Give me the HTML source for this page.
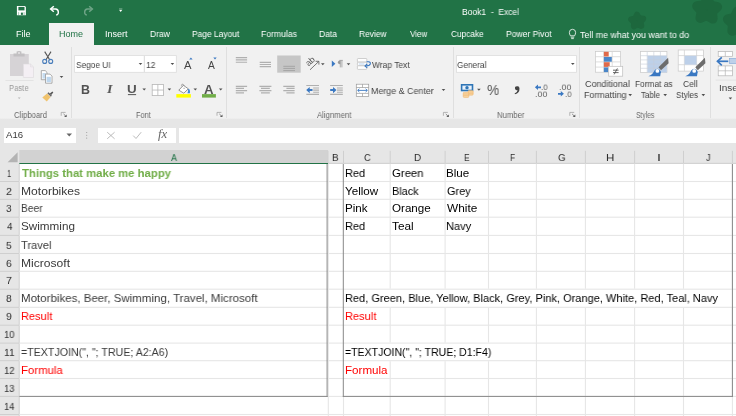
<!DOCTYPE html>
<html><head><meta charset="utf-8"><title>Book1 - Excel</title>
<style>
html,body{margin:0;padding:0;background:#fff;}
#app{position:relative;width:736px;height:416px;overflow:hidden;background:#fff;font-family:"Liberation Sans",sans-serif;}
#app div,#app svg{position:absolute;}
#app svg{will-change:transform;}
.t{position:absolute;will-change:transform;white-space:pre;line-height:1;transform-origin:0 50%;font-family:"Liberation Sans",sans-serif;}
.vl{width:1px;background:#d8d8d8;}
.hl{height:1px;background:#d8d8d8;}
.sep{width:1px;background:#dfdfdf;top:47px;height:70.6px;}
.box{background:#fff;border:1px solid #dcdcdc;box-sizing:border-box;}

</style></head>
<body>
<div id="app">
<!-- title bar -->
<div style="left:0;top:0;width:736px;height:44.7px;background:#217346;"></div>
<!-- home tab -->
<div style="left:49px;top:23.3px;width:45.3px;height:22px;background:#f1f1f1;"></div>
<!-- ribbon -->
<div style="left:0;top:44.7px;width:736px;height:74.8px;background:#f1f1f1;"></div>
<!-- formula bar strip -->
<div style="left:0;top:119.5px;width:736px;height:44px;background:#e6e6e6;"></div>
<div style="left:0;top:117.6px;width:736px;height:2.4px;background:linear-gradient(#f1f1f1,#e3e3e3);"></div>
<!-- group separators -->
<div class="sep" style="left:71px;"></div>
<div class="sep" style="left:226.4px;"></div>
<div class="sep" style="left:453.2px;"></div>
<div class="sep" style="left:579.2px;"></div>
<div class="sep" style="left:710.2px;"></div>
<!-- name box, formula boxes -->
<div style="left:4px;top:127.5px;width:71.5px;height:15px;background:#fff;"></div>
<div style="left:97.5px;top:127.5px;width:78px;height:15px;background:#fff;"></div>
<div style="left:178.5px;top:127.5px;width:560px;height:15px;background:#fff;"></div>
<!-- column header -->
<div style="left:19.3px;top:150.2px;width:308.6px;height:13px;background:#d2d2d2;"></div>
<div style="left:19.3px;top:162.7px;width:308.6px;height:1.2px;background:#217346;"></div>
<!-- grid area white -->
<div style="left:19.3px;top:163.9px;width:717px;height:253px;background:#fff;"></div>
<!-- title bar decorations (clovers) -->
<svg style="left:0;top:0;" width="736" height="45" viewBox="0 0 736 45">
  <g fill="#1d673d" stroke="#1d673d" stroke-linejoin="round">
    <polygon points="637.0,14.7 639.1,18.2 643.2,18.7 640.5,21.9 641.3,25.9 637.5,24.3 633.9,26.3 634.2,22.2 631.2,19.4 635.2,18.4" stroke-width="6"/>
    <polygon points="707.6,-0.9 710.5,5.4 717.3,7.0 712.2,11.8 712.8,18.8 706.7,15.4 700.3,18.1 701.6,11.2 697.0,6.0 704.0,5.1" stroke-width="9.6"/>
    <polygon points="737.4,11.3 741.0,17.3 748.0,18.2 743.4,23.4 744.7,30.3 738.3,27.6 732.2,31.0 732.8,24.0 727.7,19.2 734.5,17.6" stroke-width="9.6"/>
  </g>
</svg>
<!-- QAT icons -->
<svg style="left:0;top:0;" width="140" height="24" viewBox="0 0 140 24">
  <!-- save -->
  <path d="M16.9 6.1 H24.9 L25.9 7.1 V15.3 H16.9 Z" fill="#fff"/>
  <rect x="18.4" y="6.9" width="6.1" height="3.5" fill="#217346"/>
  <rect x="20.9" y="12.6" width="2" height="2.3" fill="#217346"/>
  <rect x="18" y="12.1" width="1.1" height="3.2" fill="#217346" opacity="0.35"/>
  <rect x="23.5" y="12.1" width="1.2" height="3.2" fill="#217346" opacity="0.35"/>
  <!-- undo -->
  <path d="M50.8 9 H55.6 A3.2 3.2 0 0 1 56.2 15.2" fill="none" stroke="#fff" stroke-width="1.4"/>
  <path d="M53.8 6.2 L50.6 9 L53.8 11.8" fill="none" stroke="#fff" stroke-width="1.5"/>
  <!-- redo (dim) -->
  <g opacity="0.35">
  <path d="M92.2 9 H87.4 A3.2 3.2 0 0 0 86.8 15.2" fill="none" stroke="#fff" stroke-width="1.4"/>
  <path d="M89.2 6.2 L92.4 9 L89.2 11.8" fill="none" stroke="#fff" stroke-width="1.5"/>
  </g>
  <!-- customize arrow -->
  <path d="M119 9.8 H122.4 L120.7 12 Z" fill="#fff"/>
  <rect x="119" y="8.3" width="3.4" height="0.7" fill="#fff" opacity="0.35"/>
</svg>
<!-- RIBBON ICONS -->
<svg style="left:0;top:0;" width="736" height="150" viewBox="0 0 736 150">
  <!-- paste (disabled) -->
  <rect x="10" y="54" width="18.8" height="22" fill="#d6d3d6"/>
  <path d="M13.5 56.6 V53.4 H16.6 V51.6 Q19 50.4 21.4 51.6 V53.4 H24.6 V56.6 Z" fill="#c2c0c2"/>
  <circle cx="19" cy="52.9" r="1" fill="#e6e4e6"/>
  <path d="M23.4 64 H30.6 L33.5 66.9 V77.5 H23.4 Z" fill="#f4eff4" stroke="#dedade" stroke-width="0.6"/>
  <path d="M30.6 64 V66.9 H33.5" fill="none" stroke="#dedade" stroke-width="0.6"/>
  <rect x="5.4" y="80.2" width="28.2" height="0.7" fill="#dddddd"/>
  <path d="M17.8 97.4 H20.6 L19.2 99 Z" fill="#b4b4b4"/>
  <!-- scissors -->
  <path d="M44.7 51.6 L50 60.2 M51 51.6 L45.7 60.2" stroke="#555" stroke-width="1.1" fill="none"/>
  <circle cx="44.7" cy="61.4" r="2" fill="none" stroke="#4a7ebb" stroke-width="1.1"/>
  <circle cx="50.7" cy="61.4" r="2" fill="none" stroke="#4a7ebb" stroke-width="1.1"/>
  <!-- copy -->
  <path d="M41.3 70.6 H45.2 L47 72.4 V79.7 H41.3 Z" fill="#fff" stroke="#8a8a8a" stroke-width="0.7"/>
  <rect x="42.5" y="73" width="3.4" height="5.6" fill="#c5dbef"/>
  <path d="M45.5 74.1 H50 L52 76.1 V83.2 H45.5 Z" fill="#fff" stroke="#8a8a8a" stroke-width="0.7"/>
  <rect x="46.6" y="76.8" width="4.3" height="5.4" fill="#bcd6ee"/>
  <path d="M59.7 75.9 H63.3 L61.5 78.0 Z" fill="#505050"/>
  <!-- format painter -->
  <path d="M42.3 97.4 L47 93.6 L50.6 97 L46.8 101.6 Z" fill="#f0c36d"/>
  <path d="M47.3 93.2 L48.6 92.2 L51.8 95.4 L50.9 96.8 Z" fill="#666"/>
  <path d="M49.8 93.6 L52.4 91.6 L53.3 92.5 L51.2 95 Z" fill="#555"/>
</svg>
<svg style="left:0;top:0;" width="736" height="150" viewBox="0 0 736 150">
  <!-- font combo boxes -->
  <rect x="74.6" y="55.6" width="69.6" height="16.7" fill="#fff" stroke="#dcdcdc" stroke-width="0.8"/>
  <rect x="144.6" y="55.6" width="31.7" height="16.7" fill="#fff" stroke="#dcdcdc" stroke-width="0.8"/>
  <path d="M138.7 62.9 H142.3 L140.5 65.0 Z" fill="#505050"/>
  <path d="M170.6 62.9 H174.2 L172.4 65.0 Z" fill="#505050"/>
  <!-- grow/shrink font triangles -->
  <path d="M189.2 59.6 L190.9 57.4 L192.6 59.6 Z" fill="#3a78c2"/>
  <path d="M213.3 57.4 H216.7 L215 59.6 Z" fill="#3a78c2"/>
  <!-- underline of U -->
  <rect x="127.9" y="94.2" width="8.2" height="0.9" fill="#444"/>
  <path d="M142.4 88.5 H146.0 L144.2 90.6 Z" fill="#505050"/>
  <!-- borders icon -->
  <rect x="152.2" y="84.5" width="11.3" height="11.1" fill="#fff" stroke="#b6b6b6" stroke-width="0.8"/>
  <path d="M157.85 84.5 V95.6 M152.2 90.05 H163.5" stroke="#b6b6b6" stroke-width="0.8"/>
  <path d="M167.6 88.5 H171.2 L169.4 90.6 Z" fill="#505050"/>
  <!-- fill bucket -->
  <path d="M189.2 88.9 Q190.6 91.2 189.9 93.3 L187.4 93.2 Q188.9 91.4 187.8 89.2 Z" fill="#3a86d8"/>
  <path d="M178.8 90.2 L183.4 85.3 L188.3 88.8 L183.8 93.2 Z" fill="#fff" stroke="#6a6a6a" stroke-width="0.7" stroke-linejoin="round"/>
  <path d="M182.2 86.5 L181.5 85.2 Q181.6 84 182.9 84.1 L184.4 86" fill="none" stroke="#7a7a7a" stroke-width="0.6"/>
  <path d="M183.4 88.3 H184.8" stroke="#8a8a8a" stroke-width="0.7"/>
  <rect x="176.3" y="94.1" width="14.6" height="3.5" fill="#ffff00"/>
  <path d="M193.5 88.5 H197.1 L195.3 90.6 Z" fill="#505050"/>
  <!-- font color bar -->
  <rect x="202" y="94.1" width="13.9" height="3.5" fill="#70ad47"/>
  <path d="M218.9 88.5 H222.5 L220.7 90.6 Z" fill="#505050"/>
  <!-- launchers -->
  <path d="M61.2 115.8 V112.4 H65.6" fill="none" stroke="#9a9a9a" stroke-width="0.7"/><path d="M63.6 114 L65.8 116.2" fill="none" stroke="#6a6a6a" stroke-width="0.8"/><path d="M66.7 114.5 V117.1 H64.1 Z" fill="#5a5a5a"/>
  <path d="M217.0 115.8 V112.4 H221.4" fill="none" stroke="#9a9a9a" stroke-width="0.7"/><path d="M219.4 114 L221.6 116.2" fill="none" stroke="#6a6a6a" stroke-width="0.8"/><path d="M222.5 114.5 V117.1 H219.9 Z" fill="#5a5a5a"/>
  <path d="M443.4 115.8 V112.4 H447.8" fill="none" stroke="#9a9a9a" stroke-width="0.7"/><path d="M445.8 114 L448.0 116.2" fill="none" stroke="#6a6a6a" stroke-width="0.8"/><path d="M448.9 114.5 V117.1 H446.3 Z" fill="#5a5a5a"/>
  <path d="M569.8 115.8 V112.4 H574.2" fill="none" stroke="#9a9a9a" stroke-width="0.7"/><path d="M572.2 114 L574.4 116.2" fill="none" stroke="#6a6a6a" stroke-width="0.8"/><path d="M575.3 114.5 V117.1 H572.7 Z" fill="#5a5a5a"/>
  <!-- ALIGNMENT -->
  <g stroke="#b0b0b0" stroke-width="1.15">
    <path d="M235.8 57.6 H247.1 M235.8 59.8 H247.1 M235.8 62.2 H247.1"/>
    <path d="M259.7 62.4 H271 M259.7 64.5 H271 M259.7 66.6 H271"/>
  </g>
  <rect x="277.2" y="55.5" width="23.5" height="17.2" fill="#c6c6c6"/>
  <path d="M283.3 66.3 H295 M283.3 68.4 H295 M283.3 70.6 H295" stroke="#a4a4a4" stroke-width="1"/>
  <!-- row 2 align -->
  <g stroke="#b0b0b0" stroke-width="1.15">
    <path d="M235.8 86.3 H247.1 M235.8 88.4 H244 M235.8 90.6 H247.1 M235.8 92.8 H244"/>
    <path d="M259.4 86.3 H271.4 M261 88.4 H269.8 M259.4 90.6 H271.4 M261 92.8 H269.8"/>
    <path d="M283.3 86.3 H294.6 M286.4 88.4 H294.6 M283.3 90.6 H294.6 M286.4 92.8 H294.6"/>
  </g>
  <!-- orientation -->
  <g>
    <text x="0" y="0" transform="translate(308.4,66.6) rotate(-42)" font-family="'Liberation Sans',sans-serif" font-size="8.6" fill="#555">ab</text>
    <path d="M310 69.8 L318.6 61.6" stroke="#555" stroke-width="0.8" fill="none"/>
    <path d="M315.6 61.3 H318.9 V64.6" stroke="#555" stroke-width="0.8" fill="none"/>
    <path d="M321.0 63.2 H324.6 L322.8 65.3 Z" fill="#505050"/>
  </g>
  <!-- text direction -->
  <path d="M331.8 60.5 L335.4 63.7 L331.8 66.9 Z" fill="#3a78c2"/>
  <path d="M339.4 60.4 H342.8 M340.3 60.4 V67.4 M341.9 60.4 V67.4" stroke="#9a9a9a" stroke-width="0.8" fill="none"/>
  <path d="M339.8 60.4 A1.9 1.9 0 0 0 339.8 64.2 H340.3 V60.4 Z" fill="#9a9a9a"/>
  <path d="M346.7 63.2 H350.3 L348.5 65.3 Z" fill="#505050"/>
  <!-- decrease indent -->
  <g stroke="#b0b0b0" stroke-width="1.15">
    <path d="M306.3 85.5 H319 M306.3 94.4 H319 M313.2 88 H319 M313.2 90.1 H319 M313.2 92.2 H319"/>
    <path d="M330.1 85.5 H342.8 M330.1 94.4 H342.8 M337 88 H342.8 M337 90.1 H342.8 M337 92.2 H342.8"/>
  </g>
  <path d="M306.2 90.1 L309.7 86.9 V89.1 H312.5 V91.1 H309.7 V93.3 Z" fill="#3a78c2"/>
  <path d="M336.5 90.1 L333 86.9 V89.1 H330.2 V91.1 H333 V93.3 Z" fill="#3a78c2"/>
</svg>
<svg style="left:0;top:0;will-change:transform;" width="736" height="150" viewBox="0 0 736 150">
  <!-- wrap text icon -->
  <g fill="#fff" stroke="#bcbcbc" stroke-width="0.7">
    <rect x="357.4" y="58.5" width="9.4" height="3.6" rx="0.8"/>
    <rect x="357.4" y="62.2" width="9.4" height="3.5" rx="0.8"/>
    <rect x="357.4" y="65.8" width="9.4" height="3.6" rx="0.8"/>
  </g>
  <path d="M358.8 64 H364.4" stroke="#9cc0e8" stroke-width="0.7"/>
  <path d="M366.6 61.7 H368.6 Q370.6 61.9 370.3 63.9 Q369.9 65.9 366.2 65.9" fill="none" stroke="#3a78c2" stroke-width="1.1"/>
  <path d="M367.2 64 L365 65.9 L367.2 67.8" fill="none" stroke="#3a78c2" stroke-width="1.1"/>
  <!-- merge & center icon -->
  <g fill="#fff" stroke="#9a9a9a" stroke-width="0.7">
    <rect x="356.3" y="84.2" width="12.4" height="12.3"/>
    <path d="M356.3 87.5 H368.7 M356.3 93.4 H368.7 M362.5 84.2 V87.5 M362.5 93.4 V96.5" fill="none"/>
  </g>
  <path d="M358 90.4 H367" stroke="#3a78c2" stroke-width="0.9"/>
  <path d="M359.4 88.8 L357.6 90.4 L359.4 92 M365.6 88.8 L367.4 90.4 L365.6 92" fill="none" stroke="#3a78c2" stroke-width="0.9"/>
  <path d="M441.7 88.9 H445.3 L443.5 91.0 Z" fill="#505050"/>
  <!-- number combo -->
  <rect x="456.4" y="55.6" width="120.1" height="16.7" fill="#fff" stroke="#dcdcdc" stroke-width="0.8"/>
  <path d="M571.0 62.9 H574.6 L572.8 65.0 Z" fill="#505050"/>
  <!-- currency icon -->
  <rect x="461.6" y="84.8" width="10.9" height="5.7" fill="#e8f1fa" stroke="#2e75b6" stroke-width="1.6"/>
  <ellipse cx="467" cy="87.7" rx="1.7" ry="1.6" fill="#2e75b6"/>
  <g fill="#f8d5a4" stroke="#efb266" stroke-width="0.5">
    <rect x="468" y="90.6" width="5.2" height="4.6" rx="1"/>
    <path d="M468 92.1 H473.2 M468 93.7 H473.2" fill="none"/>
    <rect x="463.2" y="92.3" width="5.6" height="5.2" rx="1"/>
    <path d="M463.2 94 H468.8 M463.2 95.7 H468.8" fill="none"/>
  </g>
  <path d="M477.1 88.7 H480.7 L478.9 90.8 Z" fill="#505050"/>
  <!-- comma -->
  <path d="M517 86.2 A2 2 0 1 0 517.6 90.1 Q517.4 92.6 514.6 93.6 L515 94.3 Q519.6 92.8 519.5 88.4 A2.2 2.2 0 0 0 517 86.2 Z" fill="#444"/>
  <!-- dec/inc decimal arrows -->
  <path d="M534.9 87.3 L538 84.6 V86.4 H541 V88.2 H538 V90 Z" fill="#3a78c2"/>
  <path d="M563.9 93.8 L560.8 91.1 V92.9 H558 V94.7 H560.8 V96.5 Z" fill="#3a78c2"/>
  <!-- Conditional formatting icon -->
  <rect x="595.4" y="51.5" width="25.2" height="20.7" fill="#fff" stroke="#c8c8c8" stroke-width="0.7"/>
  <path d="M595.4 56.7 H620.6 M595.4 61.9 H620.6 M595.4 67.1 H620.6 M603.6 51.5 V72.2 M612.2 51.5 V72.2" stroke="#d0d0d0" stroke-width="0.7" fill="none"/>
  <rect x="603.9" y="51.8" width="4.8" height="4.7" fill="#e06a4a"/>
  <rect x="603.9" y="57" width="7.9" height="4.7" fill="#4a86c8"/>
  <rect x="603.9" y="62.2" width="5.8" height="4.7" fill="#e06a4a"/>
  <rect x="603.9" y="67.4" width="4.4" height="4.7" fill="#4a86c8"/>
  <rect x="608.7" y="66.3" width="14" height="9.9" fill="#fff" stroke="#bdbdbd" stroke-width="0.7"/>
  <path d="M613 70.2 H618.6 M613 72.6 H618.6 M617.4 68.4 L614.2 74.4" stroke="#444" stroke-width="0.8" fill="none"/>
  <path d="M628.4 94.1 H632.0 L630.2 96.2 Z" fill="#505050"/>
  <!-- Format as table icon -->
  <rect x="640.5" y="51.5" width="26.4" height="21.1" fill="#fff" stroke="#c8c8c8" stroke-width="0.7"/>
  <rect x="647.4" y="55.8" width="19.4" height="16.7" fill="#bdd0e9"/>
  <path d="M640.5 55.7 H666.9 M640.5 59.9 H666.9 M640.5 64.1 H666.9 M640.5 68.3 H666.9 M647.2 51.5 V72.6 M653.8 51.5 V72.6 M660.4 51.5 V72.6" stroke="#c6cdd8" stroke-width="0.6" fill="none"/>
  <path d="M668.1 57.7 L668.6 63.3 L661.0 70.2 L658.5 67.3 Z" fill="#6c6c6c"/>
  <path d="M648.4 76.3 Q652.8 74.6 654.6 70.2 Q656.6 67.6 659.4 69.4 Q661.4 71.4 660.6 73.4 L660.2 76.3 Z" fill="#3a78c2"/>
  <circle cx="657.4" cy="70.9" r="1.9" fill="#fff"/>
  <path d="M663.4 94.1 H667.0 L665.2 96.2 Z" fill="#505050"/>
  <!-- Cell styles icon -->
  <rect x="678.2" y="50" width="25.2" height="21.1" fill="#fff" stroke="#c8c8c8" stroke-width="0.7"/>
  <path d="M678.2 55.6 H703.4 M678.2 64.7 H703.4 M684.4 50 V71.1 M696.6 50 V71.1" stroke="#d0d0d0" stroke-width="0.7" fill="none"/>
  <rect x="684.6" y="55.8" width="11.9" height="8.8" fill="#bdd0e9"/>
  <path d="M704.9 57.7 L705.4 63.3 L697.8 70.2 L695.3 67.3 Z" fill="#6c6c6c"/>
  <path d="M685.2 76.3 Q689.6 74.6 691.4 70.2 Q693.4 67.6 696.2 69.4 Q698.2 71.4 697.4 73.4 L697.0 76.3 Z" fill="#3a78c2"/>
  <circle cx="694.2" cy="70.9" r="1.9" fill="#fff"/>
  <path d="M701.5 94.1 H705.1 L703.3 96.2 Z" fill="#505050"/>
  <!-- Insert icon -->
  <g fill="#fff" stroke="#b4b4b4" stroke-width="0.7">
    <rect x="718.2" y="51.5" width="14.2" height="4.8"/>
    <path d="M725.3 51.5 V56.3" fill="none"/>
    <rect x="718.2" y="65.9" width="14.2" height="9.9"/>
    <path d="M725.3 65.9 V75.8 M718.2 70.8 H732.4" fill="none"/>
  </g>
  <rect x="729.5" y="58.5" width="8" height="5" fill="#bdd0e9" stroke="#7fa6d6" stroke-width="0.6"/>
  <path d="M717.6 61.3 H728.3" stroke="#3a78c2" stroke-width="1.7" fill="none"/><path d="M721.8 57.3 L717.4 61.3 L721.8 65.3" stroke="#3a78c2" stroke-width="1.6" fill="none"/>
  <rect x="715.6" y="79.7" width="21" height="0.7" fill="#dddddd"/>
  <path d="M728.6 97.5 H732.2 L730.4 99.6 Z" fill="#505050"/>
  <!-- lightbulb -->
  <path d="M570.4 35.8 Q569.4 34 569.4 32.4 A3.1 3.1 0 0 1 575.6 32.4 Q575.6 34 574.6 35.8 Z" fill="none" stroke="#fff" stroke-width="0.8"/>
  <path d="M570.8 37.2 H574.2 M571.2 38.6 H573.8" stroke="#fff" stroke-width="0.8"/>
  <!-- formula bar icons -->
  <g fill="#9a9a9a">
    <circle cx="86.7" cy="132.5" r="0.55"/><circle cx="86.7" cy="135.3" r="0.55"/><circle cx="86.7" cy="138.1" r="0.55"/>
  </g>
  <path d="M107.2 132.2 L114.6 138.8 M114.6 132.2 L107.2 138.8" stroke="#b4b4b4" stroke-width="0.9" fill="none"/>
  <path d="M133.2 135.6 L136 138.5 L141.2 132.2" stroke="#b4b4b4" stroke-width="0.9" fill="none"/>
  <path d="M66.5 133.4 H72 L69.25 136.6 Z" fill="#666"/>
</svg>

<!-- grid -->
<svg style="left:0;top:0;" width="736" height="416" viewBox="0 0 736 416">
<rect x="0" y="150" width="19.3" height="266" fill="#e6e6e6"/>
<path d="M17.6 152.2 L17.6 162.2 L7.6 162.2 Z" fill="#b4b4b4"/>
<rect x="327.50" y="150.80" width="1.0" height="12.20" fill="#cfcfcf"/>
<rect x="343.00" y="150.80" width="1.0" height="12.20" fill="#cfcfcf"/>
<rect x="389.70" y="150.80" width="1.0" height="12.20" fill="#cfcfcf"/>
<rect x="444.60" y="150.80" width="1.0" height="12.20" fill="#cfcfcf"/>
<rect x="488.00" y="150.80" width="1.0" height="12.20" fill="#cfcfcf"/>
<rect x="535.90" y="150.80" width="1.0" height="12.20" fill="#cfcfcf"/>
<rect x="584.90" y="150.80" width="1.0" height="12.20" fill="#cfcfcf"/>
<rect x="634.10" y="150.80" width="1.0" height="12.20" fill="#cfcfcf"/>
<rect x="683.00" y="150.80" width="1.0" height="12.20" fill="#cfcfcf"/>
<rect x="731.90" y="150.80" width="1.0" height="12.20" fill="#cfcfcf"/>
<rect x="328.00" y="162.80" width="408.00" height="1.0" fill="#cfcfcf"/>
<rect x="18.70" y="164.00" width="1.0" height="252.00" fill="#cfcfcf"/>
<rect x="0.00" y="181.00" width="19.30" height="1.0" fill="#cfcfcf"/>
<rect x="0.00" y="198.80" width="19.30" height="1.0" fill="#cfcfcf"/>
<rect x="0.00" y="216.70" width="19.30" height="1.0" fill="#cfcfcf"/>
<rect x="0.00" y="234.90" width="19.30" height="1.0" fill="#cfcfcf"/>
<rect x="0.00" y="253.00" width="19.30" height="1.0" fill="#cfcfcf"/>
<rect x="0.00" y="270.80" width="19.30" height="1.0" fill="#cfcfcf"/>
<rect x="0.00" y="288.70" width="19.30" height="1.0" fill="#cfcfcf"/>
<rect x="0.00" y="306.80" width="19.30" height="1.0" fill="#cfcfcf"/>
<rect x="0.00" y="324.70" width="19.30" height="1.0" fill="#cfcfcf"/>
<rect x="0.00" y="342.60" width="19.30" height="1.0" fill="#cfcfcf"/>
<rect x="0.00" y="360.20" width="19.30" height="1.0" fill="#cfcfcf"/>
<rect x="0.00" y="378.00" width="19.30" height="1.0" fill="#cfcfcf"/>
<rect x="0.00" y="395.90" width="19.30" height="1.0" fill="#cfcfcf"/>
<rect x="0.00" y="414.00" width="19.30" height="1.0" fill="#cfcfcf"/>
<rect x="19.30" y="180.95" width="716.70" height="1.1" fill="#e6e6e6"/>
<rect x="19.30" y="198.75" width="716.70" height="1.1" fill="#e6e6e6"/>
<rect x="19.30" y="216.65" width="716.70" height="1.1" fill="#e6e6e6"/>
<rect x="19.30" y="234.85" width="716.70" height="1.1" fill="#e6e6e6"/>
<rect x="19.30" y="252.95" width="716.70" height="1.1" fill="#e6e6e6"/>
<rect x="19.30" y="270.75" width="716.70" height="1.1" fill="#e6e6e6"/>
<rect x="19.30" y="288.65" width="716.70" height="1.1" fill="#e6e6e6"/>
<rect x="19.30" y="306.75" width="716.70" height="1.1" fill="#e6e6e6"/>
<rect x="19.30" y="324.65" width="716.70" height="1.1" fill="#e6e6e6"/>
<rect x="19.30" y="342.55" width="716.70" height="1.1" fill="#e6e6e6"/>
<rect x="19.30" y="360.15" width="716.70" height="1.1" fill="#e6e6e6"/>
<rect x="19.30" y="377.95" width="716.70" height="1.1" fill="#e6e6e6"/>
<rect x="19.30" y="395.85" width="716.70" height="1.1" fill="#e6e6e6"/>
<rect x="19.30" y="413.95" width="716.70" height="1.1" fill="#e6e6e6"/>
<rect x="327.75" y="163.90" width="1.1" height="252.10" fill="#e6e6e6"/>
<rect x="342.95" y="396.90" width="1.1" height="19.10" fill="#e6e6e6"/>
<rect x="389.65" y="163.90" width="1.1" height="124.80" fill="#e6e6e6"/>
<rect x="389.65" y="307.80" width="1.1" height="34.80" fill="#e6e6e6"/>
<rect x="389.65" y="361.20" width="1.1" height="54.80" fill="#e6e6e6"/>
<rect x="444.55" y="163.90" width="1.1" height="124.80" fill="#e6e6e6"/>
<rect x="444.55" y="307.80" width="1.1" height="34.80" fill="#e6e6e6"/>
<rect x="444.55" y="361.20" width="1.1" height="54.80" fill="#e6e6e6"/>
<rect x="487.95" y="163.90" width="1.1" height="124.80" fill="#e6e6e6"/>
<rect x="487.95" y="307.80" width="1.1" height="34.80" fill="#e6e6e6"/>
<rect x="487.95" y="361.20" width="1.1" height="54.80" fill="#e6e6e6"/>
<rect x="535.85" y="163.90" width="1.1" height="124.80" fill="#e6e6e6"/>
<rect x="535.85" y="307.80" width="1.1" height="108.20" fill="#e6e6e6"/>
<rect x="584.85" y="163.90" width="1.1" height="124.80" fill="#e6e6e6"/>
<rect x="584.85" y="307.80" width="1.1" height="108.20" fill="#e6e6e6"/>
<rect x="634.05" y="163.90" width="1.1" height="124.80" fill="#e6e6e6"/>
<rect x="634.05" y="307.80" width="1.1" height="108.20" fill="#e6e6e6"/>
<rect x="682.95" y="163.90" width="1.1" height="124.80" fill="#e6e6e6"/>
<rect x="682.95" y="307.80" width="1.1" height="108.20" fill="#e6e6e6"/>
<rect x="731.85" y="163.90" width="1.1" height="124.80" fill="#e6e6e6"/>
<rect x="731.85" y="307.80" width="1.1" height="108.20" fill="#e6e6e6"/>
<rect x="326.60" y="164.00" width="1.0" height="232.90" fill="#888888"/>
<rect x="19.30" y="395.90" width="308.30" height="1.0" fill="#888888"/>
<rect x="342.80" y="164.00" width="1.0" height="232.90" fill="#888888"/>
<rect x="342.80" y="395.90" width="390.10" height="1.0" fill="#888888"/>
<rect x="731.90" y="164.00" width="1.0" height="232.90" fill="#888888"/>
</svg>
<!-- text labels -->
<span class="t" style="left:462.31px;top:7px;font-size:8.6px;line-height:10px;color:#ffffff;transform-origin:0 8px;transform:scale(0.9890,1.0);">Book1  -  Excel</span>
<span class="t" style="left:16.01px;top:29px;font-size:9.0px;line-height:10px;color:#ffffff;transform-origin:0 8px;transform:scale(0.9854,1.0);">File</span>
<span class="t" style="left:59.31px;top:29px;font-size:9.0px;line-height:10px;color:#217346;transform-origin:0 8px;transform:scale(0.9869,1.0);">Home</span>
<span class="t" style="left:105.22px;top:29px;font-size:9.0px;line-height:10px;color:#ffffff;transform-origin:0 8px;transform:scale(0.9812,1.0);">Insert</span>
<span class="t" style="left:150.04px;top:29px;font-size:9.0px;line-height:10px;color:#ffffff;transform-origin:0 8px;transform:scale(0.9460,1.0);">Draw</span>
<span class="t" style="left:192.05px;top:29px;font-size:9.0px;line-height:10px;color:#ffffff;transform-origin:0 8px;transform:scale(0.9350,1.0);">Page Layout</span>
<span class="t" style="left:260.83px;top:29px;font-size:9.0px;line-height:10px;color:#ffffff;transform-origin:0 8px;transform:scale(0.9587,1.0);">Formulas</span>
<span class="t" style="left:318.83px;top:29px;font-size:9.0px;line-height:10px;color:#ffffff;transform-origin:0 8px;transform:scale(0.9508,1.0);">Data</span>
<span class="t" style="left:359.35px;top:29px;font-size:9.0px;line-height:10px;color:#ffffff;transform-origin:0 8px;transform:scale(0.9339,1.0);">Review</span>
<span class="t" style="left:410.00px;top:29px;font-size:9.0px;line-height:10px;color:#ffffff;transform-origin:0 8px;transform:scale(0.9000,1.0);">View</span>
<span class="t" style="left:450.63px;top:29px;font-size:9.0px;line-height:10px;color:#ffffff;transform-origin:0 8px;transform:scale(0.9191,1.0);">Cupcake</span>
<span class="t" style="left:505.83px;top:29px;font-size:9.0px;line-height:10px;color:#ffffff;transform-origin:0 8px;transform:scale(0.9510,1.0);">Power Pivot</span>
<span class="t" style="left:580.10px;top:30px;font-size:9.0px;line-height:10px;color:#ffffff;transform-origin:0 8px;transform:scale(0.9832,1.0);">Tell me what you want to do</span>
<span class="t" style="left:9.22px;top:83px;font-size:9.2px;line-height:10px;color:#9a9a9a;transform-origin:0 8px;transform:scale(0.8352,1.0);">Paste</span>
<span class="t" style="left:13.65px;top:110px;font-size:8.8px;line-height:10px;color:#666666;transform-origin:0 8px;transform:scale(0.8784,1.0);">Clipboard</span>
<span class="t" style="left:136.22px;top:110px;font-size:8.8px;line-height:10px;color:#666666;transform-origin:0 8px;transform:scale(0.8302,1.0);">Font</span>
<span class="t" style="left:317.20px;top:110px;font-size:8.8px;line-height:10px;color:#666666;transform-origin:0 8px;transform:scale(0.8801,1.0);">Alignment</span>
<span class="t" style="left:497.28px;top:110px;font-size:8.8px;line-height:10px;color:#666666;transform-origin:0 8px;transform:scale(0.8796,1.0);">Number</span>
<span class="t" style="left:635.69px;top:110px;font-size:8.8px;line-height:10px;color:#666666;transform-origin:0 8px;transform:scale(0.7651,1.0);">Styles</span>
<span class="t" style="left:75.54px;top:60px;font-size:9.2px;line-height:10px;color:#444444;transform-origin:0 8px;transform:scale(0.9032,1.0);">Segoe UI</span>
<span class="t" style="left:145.65px;top:60px;font-size:9.2px;line-height:10px;color:#444444;transform-origin:0 8px;transform:scale(0.9324,1.0);">12</span>
<span class="t" style="left:81.00px;top:83px;font-size:12.4px;line-height:14px;color:#525252;transform-origin:0 11px;transform:scale(1.0000,1.0);font-weight:bold;">B</span>
<span class="t" style="left:107.11px;top:81px;font-size:13.2px;line-height:15px;color:#5a5a5a;transform-origin:0 12px;transform:scale(1.0690,1.0);font-style:italic;font-weight:bold;font-family:'Liberation Serif',serif;">I</span>
<span class="t" style="left:127.21px;top:82px;font-size:11.6px;line-height:13px;color:#555555;transform-origin:0 11px;transform:scale(1.1549,1.0);font-weight:bold;">U</span>
<span class="t" style="left:372.40px;top:60px;font-size:9.2px;line-height:10px;color:#444444;transform-origin:0 8px;transform:scale(0.9202,1.0);">Wrap Text</span>
<span class="t" style="left:370.92px;top:86px;font-size:9.2px;line-height:10px;color:#444444;transform-origin:0 8px;transform:scale(0.9677,1.0);">Merge &amp; Center</span>
<span class="t" style="left:457.24px;top:60px;font-size:9.2px;line-height:10px;color:#444444;transform-origin:0 8px;transform:scale(0.8966,1.0);">General</span>
<span class="t" style="left:487.43px;top:82px;font-size:14.5px;line-height:16px;color:#555555;transform-origin:0 13px;transform:scale(0.9496,1.0);">%</span>
<span class="t" style="left:585.31px;top:79px;font-size:9.2px;line-height:10px;color:#444444;transform-origin:0 8px;transform:scale(0.9781,1.0);">Conditional</span>
<span class="t" style="left:584.02px;top:90px;font-size:9.2px;line-height:10px;color:#444444;transform-origin:0 8px;transform:scale(0.9660,1.0);">Formatting</span>
<span class="t" style="left:634.86px;top:79px;font-size:9.2px;line-height:10px;color:#444444;transform-origin:0 8px;transform:scale(0.9082,1.0);">Format as</span>
<span class="t" style="left:641.23px;top:90px;font-size:9.2px;line-height:10px;color:#444444;transform-origin:0 8px;transform:scale(0.8707,1.0);">Table</span>
<span class="t" style="left:683.43px;top:79px;font-size:9.2px;line-height:10px;color:#444444;transform-origin:0 8px;transform:scale(0.9259,1.0);">Cell</span>
<span class="t" style="left:676.45px;top:90px;font-size:9.2px;line-height:10px;color:#444444;transform-origin:0 8px;transform:scale(0.8787,1.0);">Styles</span>
<span class="t" style="left:718.53px;top:83px;font-size:9.2px;line-height:10px;color:#444444;transform-origin:0 8px;transform:scale(1.0879,1.0);">Insert</span>
<span class="t" style="left:5.90px;top:129px;font-size:9.4px;line-height:11px;color:#383838;transform-origin:0 9px;transform:scale(1.0245,1.0);">A16</span>
<span class="t" style="left:170.50px;top:152px;font-size:10.2px;line-height:11px;color:#217346;transform-origin:0 9px;transform:scale(0.8824,0.87);">A</span>
<span class="t" style="left:332.41px;top:152px;font-size:10.2px;line-height:11px;color:#2c2c2c;transform-origin:0 9px;transform:scale(0.9818,0.87);">B</span>
<span class="t" style="left:363.55px;top:152px;font-size:10.2px;line-height:11px;color:#2c2c2c;transform-origin:0 9px;transform:scale(0.9077,0.87);">C</span>
<span class="t" style="left:414.33px;top:152px;font-size:10.2px;line-height:11px;color:#2c2c2c;transform-origin:0 9px;transform:scale(0.9672,0.87);">D</span>
<span class="t" style="left:463.74px;top:152px;font-size:10.2px;line-height:11px;color:#2c2c2c;transform-origin:0 9px;transform:scale(0.8214,0.87);">E</span>
<span class="t" style="left:509.96px;top:152px;font-size:10.2px;line-height:11px;color:#2c2c2c;transform-origin:0 9px;transform:scale(0.8039,0.87);">F</span>
<span class="t" style="left:557.62px;top:152px;font-size:10.2px;line-height:11px;color:#2c2c2c;transform-origin:0 9px;transform:scale(0.9552,0.87);">G</span>
<span class="t" style="left:605.69px;top:152px;font-size:10.2px;line-height:11px;color:#2c2c2c;transform-origin:0 9px;transform:scale(1.1379,0.87);">H</span>
<span class="t" style="left:656.94px;top:152px;font-size:10.2px;line-height:11px;color:#2c2c2c;transform-origin:0 9px;transform:scale(1.4000,0.87);">I</span>
<span class="t" style="left:705.51px;top:152px;font-size:10.2px;line-height:11px;color:#2c2c2c;transform-origin:0 9px;transform:scale(0.8837,0.87);">J</span>
<span class="t" style="left:7.07px;top:168px;font-size:10.0px;line-height:11px;color:#303030;transform-origin:0 9px;transform:scale(0.7500,0.89);">1</span>
<span class="t" style="left:6.26px;top:186px;font-size:10.0px;line-height:11px;color:#303030;transform-origin:0 9px;transform:scale(1.0870,0.89);">2</span>
<span class="t" style="left:6.49px;top:203px;font-size:10.0px;line-height:11px;color:#303030;transform-origin:0 9px;transform:scale(1.0204,0.89);">3</span>
<span class="t" style="left:6.60px;top:221px;font-size:10.0px;line-height:11px;color:#303030;transform-origin:0 9px;transform:scale(0.9804,0.89);">4</span>
<span class="t" style="left:6.38px;top:240px;font-size:10.0px;line-height:11px;color:#303030;transform-origin:0 9px;transform:scale(1.0417,0.89);">5</span>
<span class="t" style="left:6.27px;top:258px;font-size:10.0px;line-height:11px;color:#303030;transform-origin:0 9px;transform:scale(1.0638,0.89);">6</span>
<span class="t" style="left:6.26px;top:275px;font-size:10.0px;line-height:11px;color:#303030;transform-origin:0 9px;transform:scale(1.0870,0.89);">7</span>
<span class="t" style="left:6.38px;top:293px;font-size:10.0px;line-height:11px;color:#303030;transform-origin:0 9px;transform:scale(1.0417,0.89);">8</span>
<span class="t" style="left:6.37px;top:311px;font-size:10.0px;line-height:11px;color:#303030;transform-origin:0 9px;transform:scale(1.0638,0.89);">9</span>
<span class="t" style="left:4.34px;top:329px;font-size:10.0px;line-height:11px;color:#303030;transform-origin:0 9px;transform:scale(0.9442,0.89);">10</span>
<span class="t" style="left:4.28px;top:347px;font-size:10.0px;line-height:11px;color:#303030;transform-origin:0 9px;transform:scale(1.0304,0.89);">11</span>
<span class="t" style="left:4.33px;top:365px;font-size:10.0px;line-height:11px;color:#303030;transform-origin:0 9px;transform:scale(0.9537,0.89);">12</span>
<span class="t" style="left:4.34px;top:383px;font-size:10.0px;line-height:11px;color:#303030;transform-origin:0 9px;transform:scale(0.9442,0.89);">13</span>
<span class="t" style="left:4.35px;top:401px;font-size:10.0px;line-height:11px;color:#303030;transform-origin:0 9px;transform:scale(0.9349,0.89);">14</span>
<span class="t" style="left:21.50px;top:166px;font-size:11.6px;line-height:13px;color:#70ad47;transform-origin:0 11px;transform:scale(0.9757,1.0);font-weight:bold;">Things that make me happy</span>
<span class="t" style="left:20.66px;top:184px;font-size:11.6px;line-height:13px;color:#3a3a3a;transform-origin:0 11px;transform:scale(1.0427,1.0);">Motorbikes</span>
<span class="t" style="left:20.81px;top:201px;font-size:11.6px;line-height:13px;color:#3a3a3a;transform-origin:0 11px;transform:scale(0.8831,1.0);">Beer</span>
<span class="t" style="left:21.10px;top:219px;font-size:11.6px;line-height:13px;color:#3a3a3a;transform-origin:0 11px;transform:scale(1.0087,1.0);">Swimming</span>
<span class="t" style="left:21.41px;top:238px;font-size:11.6px;line-height:13px;color:#3a3a3a;transform-origin:0 11px;transform:scale(0.9573,1.0);">Travel</span>
<span class="t" style="left:20.66px;top:256px;font-size:11.6px;line-height:13px;color:#3a3a3a;transform-origin:0 11px;transform:scale(1.0427,1.0);">Microsoft</span>
<span class="t" style="left:20.81px;top:291px;font-size:11.6px;line-height:13px;color:#3a3a3a;transform-origin:0 11px;transform:scale(0.9924,1.0);">Motorbikes, Beer, Swimming, Travel, Microsoft</span>
<span class="t" style="left:20.84px;top:309px;font-size:11.6px;line-height:13px;color:#ff0000;transform-origin:0 11px;transform:scale(0.9513,1.0);">Result</span>
<span class="t" style="left:21.24px;top:345px;font-size:11.6px;line-height:13px;color:#3a3a3a;transform-origin:0 11px;transform:scale(0.9179,1.0);">=TEXTJOIN(", "; TRUE; A2:A6)</span>
<span class="t" style="left:20.81px;top:363px;font-size:11.6px;line-height:13px;color:#ff0000;transform-origin:0 11px;transform:scale(0.9834,1.0);">Formula</span>
<span class="t" style="left:344.64px;top:166px;font-size:11.6px;line-height:13px;color:#000000;transform-origin:0 11px;transform:scale(0.9529,1.0);">Red</span>
<span class="t" style="left:345.30px;top:184px;font-size:11.6px;line-height:13px;color:#000000;transform-origin:0 11px;transform:scale(1.0021,1.0);">Yellow</span>
<span class="t" style="left:344.62px;top:201px;font-size:11.6px;line-height:13px;color:#000000;transform-origin:0 11px;transform:scale(0.9786,1.0);">Pink</span>
<span class="t" style="left:344.64px;top:219px;font-size:11.6px;line-height:13px;color:#000000;transform-origin:0 11px;transform:scale(0.9529,1.0);">Red</span>
<span class="t" style="left:392.01px;top:166px;font-size:11.6px;line-height:13px;color:#000000;transform-origin:0 11px;transform:scale(0.9778,1.0);">Green</span>
<span class="t" style="left:391.65px;top:184px;font-size:11.6px;line-height:13px;color:#000000;transform-origin:0 11px;transform:scale(0.9396,1.0);">Black</span>
<span class="t" style="left:392.00px;top:201px;font-size:11.6px;line-height:13px;color:#000000;transform-origin:0 11px;transform:scale(0.9936,1.0);">Orange</span>
<span class="t" style="left:392.30px;top:219px;font-size:11.6px;line-height:13px;color:#000000;transform-origin:0 11px;transform:scale(1.0146,1.0);">Teal</span>
<span class="t" style="left:446.32px;top:166px;font-size:11.6px;line-height:13px;color:#000000;transform-origin:0 11px;transform:scale(0.9833,1.0);">Blue</span>
<span class="t" style="left:446.73px;top:184px;font-size:11.6px;line-height:13px;color:#000000;transform-origin:0 11px;transform:scale(0.9417,1.0);">Grey</span>
<span class="t" style="left:447.20px;top:201px;font-size:11.6px;line-height:13px;color:#000000;transform-origin:0 11px;transform:scale(1.0205,1.0);">White</span>
<span class="t" style="left:446.34px;top:219px;font-size:11.6px;line-height:13px;color:#000000;transform-origin:0 11px;transform:scale(0.9597,1.0);">Navy</span>
<span class="t" style="left:345.04px;top:291px;font-size:11.6px;line-height:13px;color:#000000;transform-origin:0 11px;transform:scale(0.9514,1.0);">Red, Green, Blue, Yellow, Black, Grey, Pink, Orange, White, Red, Teal, Navy</span>
<span class="t" style="left:345.04px;top:309px;font-size:11.6px;line-height:13px;color:#ff0000;transform-origin:0 11px;transform:scale(0.9544,1.0);">Result</span>
<span class="t" style="left:345.45px;top:345px;font-size:11.6px;line-height:13px;color:#000000;transform-origin:0 11px;transform:scale(0.9086,1.0);">=TEXTJOIN(", "; TRUE; D1:F4)</span>
<span class="t" style="left:345.01px;top:363px;font-size:11.6px;line-height:13px;color:#ff0000;transform-origin:0 11px;transform:scale(0.9930,1.0);">Formula</span>
<span class="t" style="left:184.40px;top:59px;font-size:11.2px;line-height:12px;color:#444444;transform-origin:0 10px;transform:scale(0.9600,1.0);">A</span>
<span class="t" style="left:208.30px;top:60px;font-size:10.2px;line-height:11px;color:#444444;transform-origin:0 9px;transform:scale(0.9853,1.0);">A</span>
<span class="t" style="left:204.09px;top:83px;font-size:12.6px;line-height:14px;color:#555555;transform-origin:0 11px;transform:scale(1.0471,1.0);font-weight:bold;">A</span>
<span class="t" style="left:540.93px;top:82px;font-size:8.4px;line-height:10px;color:#666666;transform-origin:0 8px;transform:scale(0.9613,0.9);">.0</span>
<span class="t" style="left:535.25px;top:89px;font-size:8.4px;line-height:10px;color:#666666;transform-origin:0 8px;transform:scale(1.0649,0.9);">.00</span>
<span class="t" style="left:558.85px;top:82px;font-size:8.4px;line-height:10px;color:#666666;transform-origin:0 8px;transform:scale(1.0649,0.9);">.00</span>
<span class="t" style="left:564.53px;top:89px;font-size:8.4px;line-height:10px;color:#666666;transform-origin:0 8px;transform:scale(0.9613,0.9);">.0</span>
<span class="t" style="left:157.80px;top:127px;font-size:12.4px;line-height:14px;color:#666666;transform-origin:0 11px;transform:scale(1.0288,1.0);font-style:italic;font-family:'Liberation Serif',serif;">fx</span>
</div>
</body></html>
